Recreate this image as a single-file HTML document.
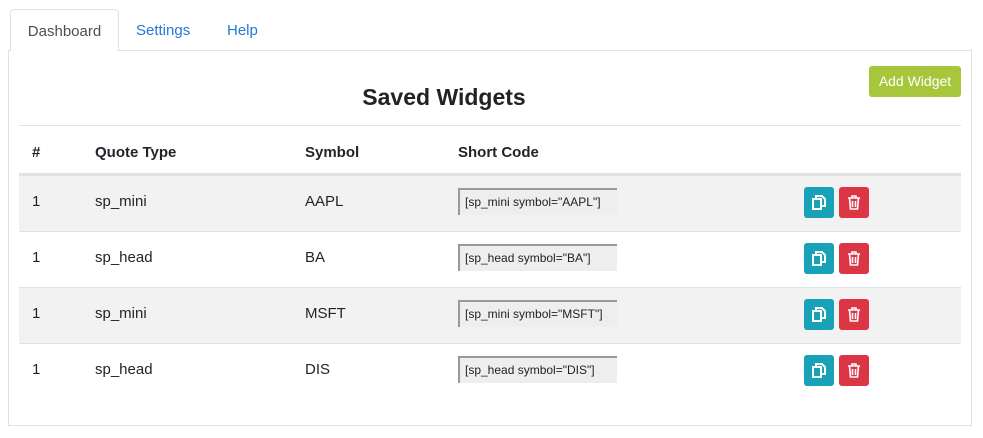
<!DOCTYPE html>
<html><head><style>
*{box-sizing:border-box;margin:0;padding:0}
body{width:983px;height:438px;background:#fff;font-family:"Liberation Sans",sans-serif;font-size:15px;color:#212529;position:relative;overflow:hidden}
.tab{position:absolute;top:9px;height:42px;line-height:44px;font-size:15px}
.t1{left:10px;width:109px;border:1px solid #dee2e6;border-bottom:none;border-radius:4px 4px 0 0;text-align:center;color:#495057;background:#fff;z-index:2;height:42px}
.t2{left:136px;color:#1e7bd8}
.t3{left:227px;color:#1e7bd8}
.panel{position:absolute;left:8px;top:50px;width:964px;height:376px;border:1px solid #dee2e6}
.title{position:absolute;left:0;width:888px;top:84px;text-align:center;font-size:23px;font-weight:bold;color:#222}
.add{position:absolute;left:869px;top:66px;width:92px;height:31px;background:#a6c73c;color:#fff;border-radius:3px;font-size:14px;text-align:center;line-height:31px}
.row{position:absolute;left:19px;width:942px;height:56px;border-top:1px solid #dee2e6}
.row span{position:absolute;top:0;line-height:52px}
.c1{left:13px}.c2{left:76px}.c3{left:286px}.c4{left:439px}
.hd{top:125px;height:50px;border-bottom:2px solid #dee2e6;font-weight:bold}
.hd span{line-height:53px}
.g{background:#f2f2f2}
.inp{position:absolute;left:439px;top:12px;width:159px;height:27px;background:#eee;border-top:2px solid #999;border-left:2px solid #999;font-size:12px;line-height:25px;padding-left:5px;color:#222}
.b{position:absolute;top:11px;width:30px;height:31px;border-radius:3px}
.bc{left:785px;background:#17a2b8}.bd{left:820px;background:#dc3545}
.b svg{position:absolute;left:8px;top:8px}
</style></head><body>
<div class="panel"></div>
<div class="tab t1">Dashboard</div>
<div class="tab t2">Settings</div>
<div class="tab t3">Help</div>
<div class="title">Saved Widgets</div>
<div class="add">Add Widget</div>
<div class="row hd"><span class="c1">#</span><span class="c2">Quote Type</span><span class="c3">Symbol</span><span class="c4">Short Code</span></div>

<div class="row g" style="top:175px"><span class="c1">1</span><span class="c2">sp_mini</span><span class="c3">AAPL</span><div class="inp">[sp_mini symbol="AAPL"]</div>
<div class="b bc"><svg width="14" height="15" viewBox="0 0 14 15" fill="none" stroke="#fff" stroke-width="2"><rect x="1" y="4" width="8" height="10"/><path d="M4 4V1h6l3 3v7H9"/></svg></div><div class="b bd"><svg width="14" height="15" viewBox="0 0 14 15" fill="none" stroke="#fff" stroke-width="1.6"><path d="M1 3h12M5 3V1h4v2M2.5 3l1 11h7l1-11M5.5 6v6M8.5 6v6"/></svg></div></div>

<div class="row" style="top:231px"><span class="c1">1</span><span class="c2">sp_head</span><span class="c3">BA</span><div class="inp">[sp_head symbol="BA"]</div>
<div class="b bc"><svg width="14" height="15" viewBox="0 0 14 15" fill="none" stroke="#fff" stroke-width="2"><rect x="1" y="4" width="8" height="10"/><path d="M4 4V1h6l3 3v7H9"/></svg></div><div class="b bd"><svg width="14" height="15" viewBox="0 0 14 15" fill="none" stroke="#fff" stroke-width="1.6"><path d="M1 3h12M5 3V1h4v2M2.5 3l1 11h7l1-11M5.5 6v6M8.5 6v6"/></svg></div></div>

<div class="row g" style="top:287px"><span class="c1">1</span><span class="c2">sp_mini</span><span class="c3">MSFT</span><div class="inp">[sp_mini symbol="MSFT"]</div>
<div class="b bc"><svg width="14" height="15" viewBox="0 0 14 15" fill="none" stroke="#fff" stroke-width="2"><rect x="1" y="4" width="8" height="10"/><path d="M4 4V1h6l3 3v7H9"/></svg></div><div class="b bd"><svg width="14" height="15" viewBox="0 0 14 15" fill="none" stroke="#fff" stroke-width="1.6"><path d="M1 3h12M5 3V1h4v2M2.5 3l1 11h7l1-11M5.5 6v6M8.5 6v6"/></svg></div></div>

<div class="row" style="top:343px"><span class="c1">1</span><span class="c2">sp_head</span><span class="c3">DIS</span><div class="inp">[sp_head symbol="DIS"]</div>
<div class="b bc"><svg width="14" height="15" viewBox="0 0 14 15" fill="none" stroke="#fff" stroke-width="2"><rect x="1" y="4" width="8" height="10"/><path d="M4 4V1h6l3 3v7H9"/></svg></div><div class="b bd"><svg width="14" height="15" viewBox="0 0 14 15" fill="none" stroke="#fff" stroke-width="1.6"><path d="M1 3h12M5 3V1h4v2M2.5 3l1 11h7l1-11M5.5 6v6M8.5 6v6"/></svg></div></div>
</body></html>
